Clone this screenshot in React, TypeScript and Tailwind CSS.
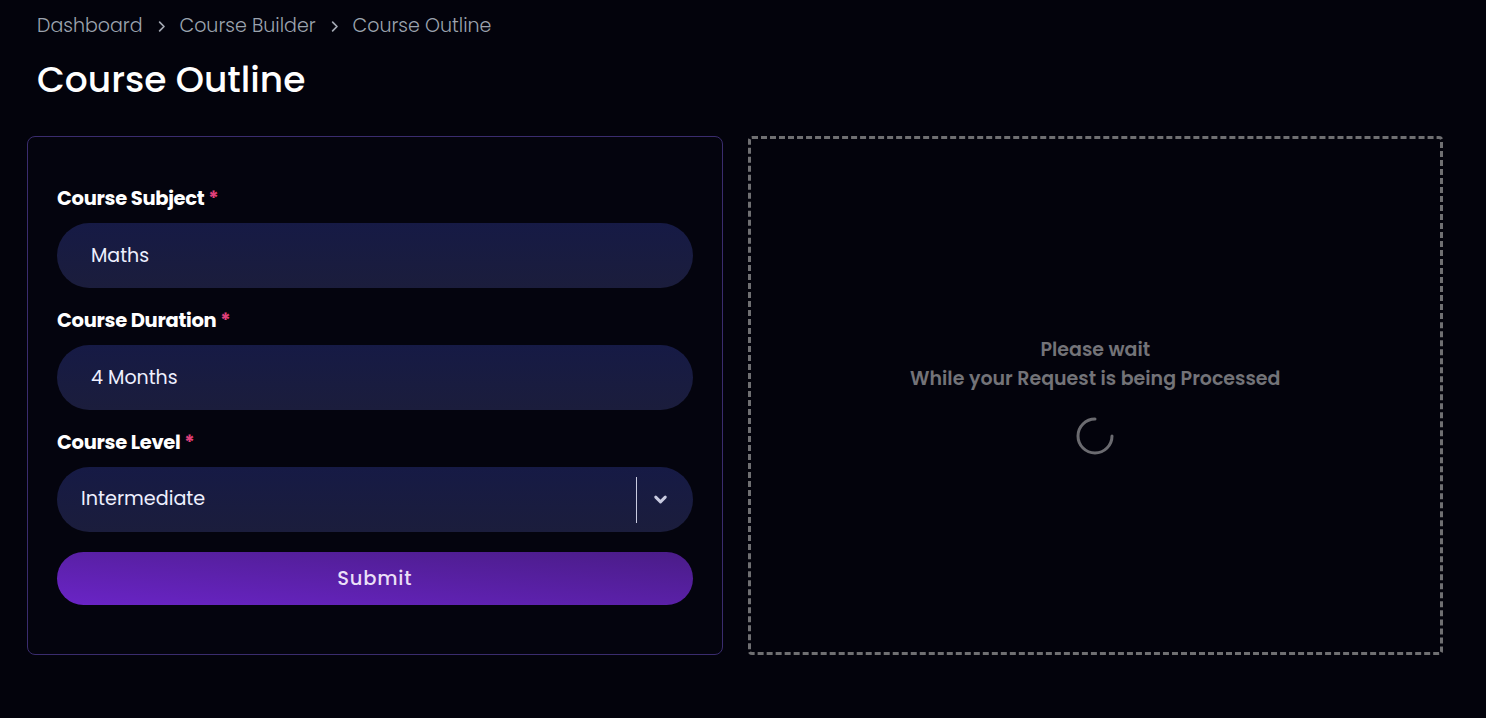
import React, { useState } from 'react';

const font = { fontFamily: 'Poppins, "Open Sans", "Liberation Sans", sans-serif' };

const Field: React.FC<{ label: string; children: React.ReactNode }> = ({ label, children }) => (
  <div>
    <label className="block text-[19.5px] font-bold text-white leading-[24px] mb-[12px] tracking-[-0.3px]">
      {label} <span className="text-[#e0407a]">*</span>
    </label>
    {children}
  </div>
);

const Chevron = () => (
  <svg className="mx-[11px]" width="15" height="15" viewBox="0 0 24 24" fill="none" stroke="#a3a8b3" strokeWidth="2.75" strokeLinecap="round" strokeLinejoin="round">
    <path d="M9 5l7 7-7 7" />
  </svg>
);

const App: React.FC = () => {
  const [subject, setSubject] = useState('Maths');
  const [duration, setDuration] = useState('4 Months');

  return (
    <div className="min-h-[718px] bg-[#03030c] pl-[27px] pr-[43px] pt-[13px]" style={font}>
      <nav className="flex items-center pl-[10px] text-[19px] text-[#9ca3af] font-light leading-[26px]">
        <span>Dashboard</span>
        <Chevron />
        <span>Course Builder</span>
        <Chevron />
        <span>Course Outline</span>
      </nav>

      <h1 className="pl-[10px] mt-[19px] text-[36px] font-medium text-white leading-[44px]">Course Outline</h1>

      <div className="mt-[34px] grid grid-cols-2 gap-[25px]">
        <div className="rounded-[8px] border border-[#3a2c6e] bg-[#04040e] px-[29px] pt-[50px] pb-[49px]">
          <div className="flex flex-col gap-[21px]">
            <Field label="Course Subject">
              <input
                value={subject}
                onChange={(e) => setSubject(e.target.value)}
                className="w-full h-[65px] rounded-full bg-gradient-to-b from-[#161a45] to-[#1b1d3c] px-[34px] text-[19px] text-[#eef0ff] outline-none"
              />
            </Field>
            <Field label="Course Duration">
              <input
                value={duration}
                onChange={(e) => setDuration(e.target.value)}
                className="w-full h-[65px] rounded-full bg-gradient-to-b from-[#161a45] to-[#1b1d3c] px-[34px] text-[19px] text-[#eef0ff] outline-none"
              />
            </Field>
            <Field label="Course Level">
              <div className="flex items-center w-full h-[65px] rounded-full bg-gradient-to-b from-[#161a45] to-[#1b1d3c] pl-[24px] pr-[23px]">
                <span className="flex-1 text-[19.2px] text-[#eef0ff]">Intermediate</span>
                <span className="w-px h-[46px] bg-[#c9cbe0]" />
                <svg className="ml-[14px]" width="19" height="19" viewBox="0 0 24 24" fill="none" stroke="#c9cbe0" strokeWidth="3.75" strokeLinecap="round" strokeLinejoin="round">
                  <path d="M6 9l6 6 6-6" />
                </svg>
              </div>
            </Field>
          </div>
          <button className="mt-[20px] w-full h-[53px] rounded-full bg-gradient-to-tr from-[#6a24c6] to-[#4a1c88] text-[19.5px] font-medium tracking-[0.8px] text-[#eadff7]">
            Submit
          </button>
        </div>

        <div className="rounded-[4px] border-[3px] border-dashed border-[#6f6f72] flex flex-col items-center justify-center">
          <p className="text-[19px] font-semibold text-[#737378] leading-[29px]">Please wait</p>
          <p className="text-[19px] font-semibold text-[#737378] leading-[29px]">While your Request is being Processed</p>
          <svg className="mt-[22px]" width="42" height="42" viewBox="0 0 42 42" fill="none">
            <path d="M21 4 A17 17 0 1 0 38 21" stroke="#6b6b70" strokeWidth="3" strokeLinecap="round" />
          </svg>
        </div>
      </div>
    </div>
  );
};

export default App;
